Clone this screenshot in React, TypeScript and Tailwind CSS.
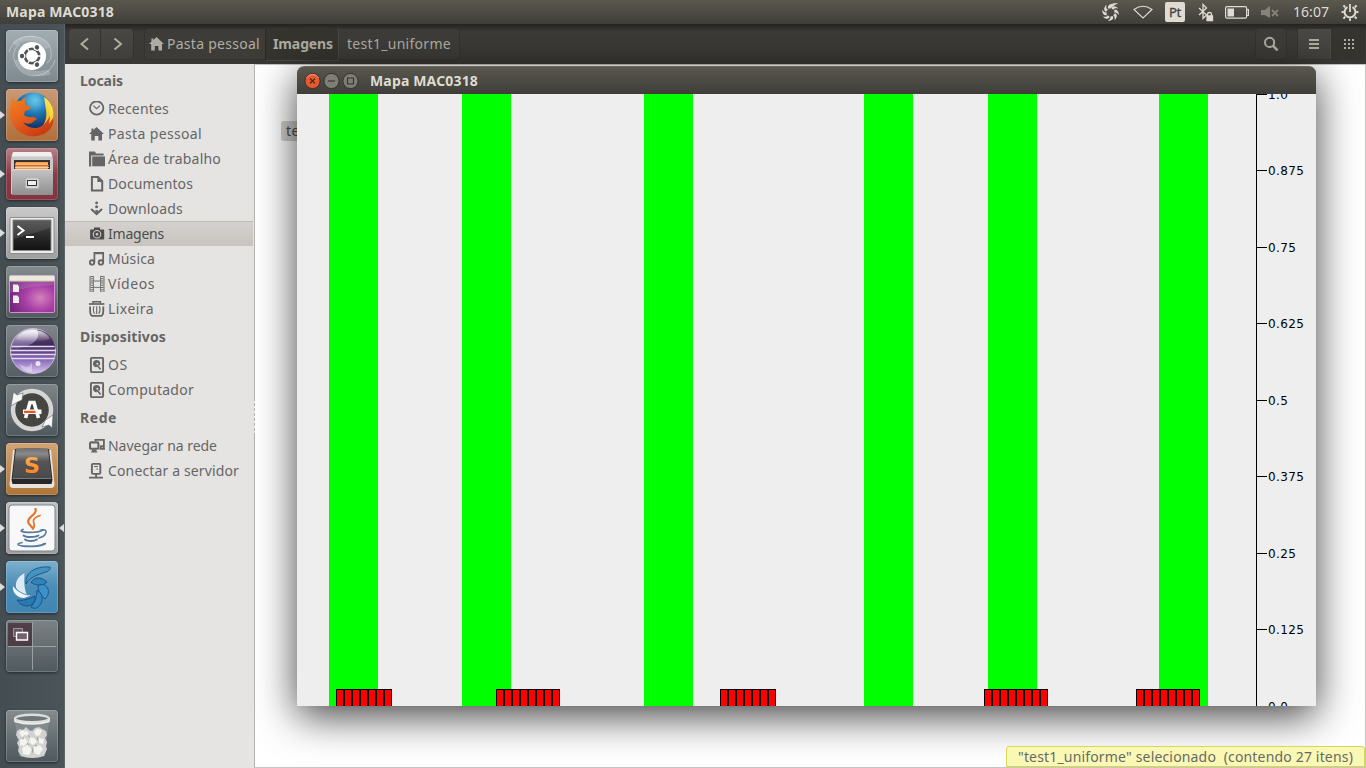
import { useLayoutEffect, useRef, type ReactNode } from "react";

/** Text whose tracking is adjusted so that it spans exactly `w` pixels. */
function Fit({ w, children, className = "" }: { w: number; children: string; className?: string }) {
  const ref = useRef<HTMLSpanElement>(null);
  useLayoutEffect(() => {
    const el = ref.current;
    if (!el) return;
    el.style.letterSpacing = "0px";
    const natural = el.getBoundingClientRect().width;
    el.style.letterSpacing = `${(w - natural) / children.length}px`;
  }, [w, children]);
  return (
    <span ref={ref} className={`inline-block shrink-0 whitespace-pre ${className}`}>
      {children}
    </span>
  );
}

/* ---------- sidebar icons (16 x 16) ---------- */

function Glyph({ children, className = "size-4" }: { children: ReactNode; className?: string }) {
  return (
    <svg viewBox="0 0 16 16" className={`shrink-0 ${className}`} fill="none" stroke="currentColor" strokeWidth="1.6">
      {children}
    </svg>
  );
}

const homeShape = <path d="M7.5 1 15 8h-2v6.4H9.4V10H5.8v4.4H2.2V8H0l2.4-2.3V2.6h2v1.3z" fill="currentColor" stroke="none" />;

const glyphs: Record<string, ReactNode> = {
  recent: (
    <>
      <circle cx="7.7" cy="7" r="6.7" strokeWidth="1.8" />
      <path d="M4.3 4.6 7.6 7.6 11 4.6" strokeWidth="1.2" />
    </>
  ),
  home: homeShape,
  folder: (
    <>
      <path d="M0 .6h6l1 2h7.6v2H2.2v11H0z" fill="currentColor" stroke="none" />
      <path d="M3.2 5.4H16v9.9H3.2z" fill="currentColor" stroke="none" />
    </>
  ),
  doc: (
    <>
      <path d="M2.9 1.1h6.2l4.1 4.1v9.2H2.9z" strokeWidth="2" />
      <path d="M8.4 1v5h5z" fill="currentColor" stroke="none" />
    </>
  ),
  download: (
    <>
      <circle cx="7.6" cy="1.9" r="1.4" fill="currentColor" stroke="none" />
      <circle cx="7.6" cy="5.8" r="1.5" fill="currentColor" stroke="none" />
      <path d="M2.2 8l5.4 5L13 8" strokeWidth="2.1" />
      <path d="M6.4 9h2.4v3H6.4z" fill="currentColor" stroke="none" />
    </>
  ),
  camera: (
    <>
      <path
        fillRule="evenodd"
        d="M2 3.4h3V1.4h6v2h3.4q.8 0 .8.8v8.6q0 .8-.8.8H1.9q-.8 0-.8-.8V4.2q0-.8.9-.8zM8 4a4.3 4.3 0 1 0 0 8.6A4.3 4.3 0 0 0 8 4z"
        fill="currentColor"
        stroke="none"
      />
      <circle cx="8" cy="8.3" r="2.3" strokeWidth="1.8" />
    </>
  ),
  music: (
    <>
      <circle cx="3" cy="11.4" r="2.2" strokeWidth="1.9" />
      <circle cx="11.9" cy="11.4" r="2.2" strokeWidth="1.9" />
      <path d="M5.4 11.4V1.8h8.8v9.6" strokeWidth="1.7" />
      <path d="M5 1h10v2.2H5z" fill="currentColor" stroke="none" />
    </>
  ),
  video: (
    <>
      <path d="M1 0v16M4.4 0v16M11.6 0v16M15 0v16M4.4 5h7.2M4.4 11.4h7.2" strokeWidth=".9" />
      <path d="M2.7 0v16M13.3 0v16" strokeWidth="2.4" strokeDasharray="1 1.2" />
    </>
  ),
  trash: (
    <>
      <path d="M4 2.6V.8h7.4v1.8" strokeWidth="1.6" />
      <path d="M0 3h15.4" strokeWidth="1.7" />
      <path d="M1.1 5.4v4.6q.2 4.9 2.6 4.9h8q2.4 0 2.6-4.9V5.4" strokeWidth="1.8" />
      <path d="M5 5.2q-1.6 4 .6 7.6M7.7 5.2v7.8M10.4 5.2q1.6 4-.6 7.6" strokeWidth="1.1" />
    </>
  ),
  disk: (
    <>
      <rect x="1.9" y=".9" width="12.2" height="14.2" rx="1" strokeWidth="1.9" />
      <circle cx="7.6" cy="6.6" r="3.6" fill="currentColor" stroke="none" />
      <circle cx="8.4" cy="6.8" r="1" className="fill-[#e6e4e2]" stroke="none" />
      <path d="M8.6 9l3 3.4" className="stroke-[#e6e4e2]" strokeWidth="3.4" />
      <path d="M8.4 8.4l3.2 4.2" strokeWidth="1.6" />
    </>
  ),
  network: (
    <>
      <rect x="1" y="4.4" width="8.4" height="6.4" rx="1" strokeWidth="2.1" />
      <path d="M3.4 11.6h3.6l1.4 2.8H2z" fill="currentColor" stroke="none" />
      <path d="M6.4 3V1.9h8.5v6.4h-3M12 8.2h2l1.4 2.6h-4z" strokeWidth="1.8" />
    </>
  ),
  server: (
    <>
      <rect x="2.9" y=".9" width="8.4" height="10" rx="1.2" strokeWidth="1.9" />
      <path d="M5 3.5h4M7.4 6h1.6" strokeWidth="1.2" />
      <path d="M7.1 11v4M0 14.6h14" strokeWidth="1.9" />
    </>
  ),
};

type Place = [icon: string, label: string, width: number];
const sections: { title: string; w: number; items: Place[] }[] = [
  {
    title: "Locais",
    w: 43,
    items: [
      ["recent", "Recentes", 61],
      ["home", "Pasta pessoal", 94],
      ["folder", "Área de trabalho", 113],
      ["doc", "Documentos", 85],
      ["download", "Downloads", 75],
      ["camera", "Imagens", 56],
      ["music", "Música", 47],
      ["video", "Vídeos", 47],
      ["trash", "Lixeira", 46],
    ],
  },
  { title: "Dispositivos", w: 86, items: [["disk", "OS", 20], ["disk", "Computador", 86]] },
  { title: "Rede", w: 37, items: [["network", "Navegar na rede", 109], ["server", "Conectar a servidor", 131]] },
];

function Sidebar() {
  return (
    <aside className="relative w-[190px] shrink-0 border-r border-r-[#b8b5b1] bg-[#e6e4e2] pt-1 text-[14px] leading-[25px] text-[#656565]">
      {sections.map((s) => (
        <section key={s.title} className="mb-[3px]">
          <h2 className="mb-[3px] flex h-[25px] pl-[15px] font-bold">
            <Fit w={s.w}>{s.title}</Fit>
          </h2>
          {s.items.map(([icon, label, w]) => (
            <div
              key={label}
              className={
                "flex h-[25px] items-center gap-[3px] pl-6 " +
                (icon === "camera" ? "mr-px border-t border-[#bfbcb8] bg-linear-to-b from-[#d4d1ce] to-[#c8c4c0] leading-6 text-[#4c4c4c]" : "")
              }
            >
              <Glyph>{glyphs[icon]}</Glyph>
              <Fit w={w}>{label}</Fit>
            </div>
          ))}
        </section>
      ))}
      <div className="absolute top-[337px] -right-px flex flex-col gap-[3px]">
        {[0, 1, 2, 3, 4, 5, 6].map((i) => (
          <i key={i} className="h-0.5 w-px bg-[#eeeeee]" />
        ))}
      </div>
    </aside>
  );
}

/* ---------- launcher artwork (52 x 52) ---------- */

function Defs() {
  return (
    <svg className="absolute size-0">
      <defs>
        <radialGradient id="globe" cx=".55" cy=".2" r=".75">
          <stop offset="0" stopColor="#6ed0f0" />
          <stop offset=".45" stopColor="#2077b5" />
          <stop offset="1" stopColor="#0c2a60" />
        </radialGradient>
        <linearGradient id="fox" x1="0" y1="0" x2=".6" y2="1">
          <stop offset="0" stopColor="#f0831f" />
          <stop offset=".55" stopColor="#e65f1c" />
          <stop offset="1" stopColor="#c93c14" />
        </linearGradient>
        <linearGradient id="flame" x1="0" y1="0" x2="0" y2="1">
          <stop offset="0" stopColor="#f7e44b" />
          <stop offset=".6" stopColor="#f5c02c" />
          <stop offset="1" stopColor="#e5701b" />
        </linearGradient>
        <linearGradient id="steel" x1="0" y1="0" x2="0" y2="1">
          <stop offset="0" stopColor="#c4c4c4" />
          <stop offset="1" stopColor="#8f8f8f" />
        </linearGradient>
        <linearGradient id="black" x1="0" y1="0" x2="0" y2="1">
          <stop offset="0" stopColor="#4a4a4a" />
          <stop offset=".5" stopColor="#2b2b2b" />
          <stop offset="1" stopColor="#111" />
        </linearGradient>
        <radialGradient id="pink" cx=".68" cy=".6" r=".75">
          <stop offset="0" stopColor="#d583b8" />
          <stop offset=".45" stopColor="#a940a8" />
          <stop offset="1" stopColor="#6b2374" />
        </radialGradient>
        <linearGradient id="orb" x1="0" y1="0" x2="0" y2="1">
          <stop offset="0" stopColor="#dcd6e6" />
          <stop offset=".25" stopColor="#9585ad" />
          <stop offset=".48" stopColor="#553c7a" />
          <stop offset=".7" stopColor="#8b6cba" />
          <stop offset="1" stopColor="#d9c6ef" />
        </linearGradient>
        <linearGradient id="shine" x1="0" y1="0" x2="0" y2="1">
          <stop offset="0" stopColor="#fff" stopOpacity=".85" />
          <stop offset="1" stopColor="#fff" stopOpacity="0" />
        </linearGradient>
        <linearGradient id="key" x1="0" y1="0" x2="0" y2="1">
          <stop offset="0" stopColor="#6e6e6e" />
          <stop offset=".2" stopColor="#8a8a8a" />
          <stop offset=".45" stopColor="#555" />
          <stop offset="1" stopColor="#4a4a4a" />
        </linearGradient>
        <linearGradient id="sand" x1="0" y1="0" x2="0" y2="1">
          <stop offset="0" stopColor="#ffb866" />
          <stop offset="1" stopColor="#ff7a08" />
        </linearGradient>
      </defs>
    </svg>
  );
}

function CircleOfFriends() {
  return (
    <>
      <g fill="none" stroke="#fff">
        <path d="M3 22C8 4 32 2 42 13 47 22 46 30 41 33" strokeOpacity=".35" />
        <path d="M49 30C44 48 22 50 13 39 5 29 7 20 13 14" strokeOpacity=".35" />
        <path d="M8 14C20 4 36 8 42 18" strokeOpacity=".18" strokeWidth="5" />
        <path d="M11 30C14 42 28 46 44 42" strokeOpacity=".22" strokeWidth="5" />
      </g>
      <circle cx="26" cy="26" r="14" fill="#fff" />
      <circle cx="26" cy="26" r="7.2" fill="none" stroke="#4d5357" strokeWidth="2.8" />
      {[0, 120, 240].map((a) => (
        <path key={a} d="M26 26h12" stroke="#fff" strokeWidth="1.3" transform={`rotate(${a} 26 26)`} />
      ))}
      <circle cx="26" cy="26" r="5.7" fill="#fff" />
      {[180, 300, 60].map((a) => (
        <g key={a} transform={`rotate(${a} 26 26)`}>
          <circle cx="35.6" cy="26" r="3.1" fill="#fff" />
          <circle cx="36" cy="26" r="2.2" fill="#4d5357" />
        </g>
      ))}
    </>
  );
}

const art: { id: string; bg: string; running?: boolean; focused?: boolean; draw: ReactNode }[] = [
  { id: "dash", bg: "from-[#a2adb2] to-[#7e8a90]", draw: <CircleOfFriends /> },
  {
    id: "firefox",
    bg: "from-[#c99a78] to-[#b06f39]",
    running: true,
    draw: (
      <>
        <circle cx="27" cy="23" r="19.5" fill="url(#globe)" />
        <path d="M22 7q6-4 11-2l-2 5 5 3-4 5-6-2-3 3-3-6z" fill="#4fb4dc" opacity=".35" />
        <path d="M38 8C51 17 50 36 39 44 33 48 26 47 24 44 35 43 42 33 40 21z" fill="url(#flame)" />
        <path
          d="M7 8 9 13Q12 11 15 12 17 9 21 8 18 12 20 16L25 18Q24 21 19 22L18 26Q22 29 26 28 30 28 31 30 29 31 26 34 21 36 17 33 21 39 30 39 40 38 46 22 51 38 38 45 24 51 12 42 2 33 4 20 5 12 7 8z"
          fill="url(#fox)"
        />
        <path d="M40 9q9 8 7 20l-4 6q3-13-3-20z" fill="#f9df45" opacity=".9" />
      </>
    ),
  },
  {
    id: "files",
    bg: "from-[#b98088] via-[#8c3a46] to-[#84323e]",
    running: true,
    draw: (
      <>
        <path d="M7 5h38l2 6v35H5V11z" fill="#c9c9c9" />
        <path d="M7 4h38l1.5 4.5H5.5z" fill="#eee" />
        <path d="M8 12h36v11H8z" fill="#39322e" />
        <path d="M10 14h32v9H9z" fill="#eb9c53" />
        <path d="M9 16h33M9 19.5h34" stroke="#f9cf9b" strokeWidth="1" />
        <path d="M9 17.5h34" stroke="#e36b21" />
        <path d="M8.5 21h35.500l3 3v23H6V24z" fill="url(#steel)" />
        <path d="M8 21.500h37" stroke="#ddd" />
        <rect x="19.5" y="30" width="13.500" height="10.500" rx="2" fill="#d8d8d8" stroke="#b4b4b4" />
        <rect x="21.500" y="32.500" width="9" height="5" fill="#eee" stroke="#333" />
      </>
    ),
  },
  {
    id: "terminal",
    bg: "from-[#c9c9c9] to-[#9e9e9e]",
    running: true,
    draw: (
      <>
        <rect x="4" y="10.500" width="44" height="36" rx="1" fill="#eee" stroke="#8c8c8c" />
        <rect x="7" y="13" width="38" height="30.500" fill="url(#black)" stroke="#888" />
        <path d="M8 14h36v7L8 32z" fill="#fff" opacity=".1" />
        <path d="M11.500 19l6 4.500-6 4.500" fill="none" stroke="#fff" strokeWidth="2" />
        <path d="M20 30h8" stroke="#fff" strokeWidth="2" />
      </>
    ),
  },
  {
    id: "window",
    bg: "from-[#858c8f] to-[#505a5f]",
    draw: (
      <>
        <rect x="3.5" y="10" width="45" height="36.500" rx="1.500" fill="url(#pink)" stroke="#d98ad4" />
        <path d="M4 15h44v4Q20 20 4 27z" fill="#fff" opacity=".12" />
        <path d="M3.500 9.500h45V15h-45z" fill="#eceadc" />
        <path d="M3.500 15.200h45" stroke="#bcb99d" />
        <path d="M7 18.500h4.500l1.500 2V26H7zM7 29.500h4.500l1.500 2V37H7z" fill="#eee" />
      </>
    ),
  },
  {
    id: "eclipse",
    bg: "from-[#7e8588] to-[#555e63]",
    draw: (
      <>
        <circle cx="27" cy="26" r="22.500" fill="url(#orb)" stroke="#c9b9dc" />
        <path d="M31 4.500c12 2 18 10 18.500 19H12C28 20 35 14 31 4.500z" fill="#331a48" opacity=".75" />
        <path d="M27 5c-9 0-15 4-17 9 8 4 24 4 34 0C42 9 36 5 27 5z" fill="url(#shine)" />
        <path d="M5.500 21.500h43M4.500 25.500h45M4.500 29.500h45M5.500 33.500h43" stroke="#e6daf3" strokeWidth="1.300" />
        <path d="M13 39q10 7 13-2v10q-9 0-13-8z" fill="#fff" opacity=".35" />
        <circle cx="32" cy="38.500" r="2.500" fill="#fff" opacity=".8" />
      </>
    ),
  },
  {
    id: "updater",
    bg: "from-[#7e8588] to-[#4f595e]",
    draw: (
      <>
        <circle cx="26" cy="26" r="17.500" fill="#454541" />
        <circle cx="26" cy="26" r="19" fill="none" stroke="#d6d6d4" strokeWidth="4.500" />
        <path d="M5 22 7.500 8l3.500 3 6-2-1 7-4.500 2zM47 31l-1 13-3-3-7 2 3.500-7z" fill="#f6f6f6" stroke="#5b6265" strokeWidth=".6" />
        <path d="M19.500 34l4.500-15.500h4L32.500 34" fill="none" stroke="#fff" strokeWidth="3.600" />
        <path d="M17 25.500h18.500v4.500H17z" fill="#fff" />
        <path d="M18 26.700h11.500v2.200H18z" fill="#e95420" />
      </>
    ),
  },
  {
    id: "sublime",
    bg: "from-[#d3a475] to-[#ad7536]",
    running: true,
    draw: (
      <>
        <path d="M7 7 3.500 41q0 4 3.500 4h38q3.500 0 3.500-4L45 7z" fill="#e7e2dc" />
        <path d="M9 6q17-1 34 0l3.500 31-1 4h-39l-1-4z" fill="#262626" />
        <path d="M10 5.500q16-1 32 0L45.500 35h-39z" fill="url(#key)" />
        <path d="M6.500 35.500h39" stroke="#777" />
        <text x="26" y="29.500" textAnchor="middle" fontSize="22" fontWeight="700" fontFamily="'DejaVu Sans', sans-serif" fill="url(#sand)">
          S
        </text>
      </>
    ),
  },
  {
    id: "java",
    bg: "from-[#c5c0bc] to-[#a39d98]",
    running: true,
    focused: true,
    draw: (
      <>
        <rect x="3" y="3" width="46" height="46" rx="3" fill="#f8f8f8" stroke="#71879a" />
        <g fill="none" strokeLinecap="round">
          <path d="M29.500 7c2.500 6-10 8-7 14 1 2 3 3 4 5" stroke="#e8742a" strokeWidth="2.200" />
          <path d="M34 13.500c-8 3-7 5.500-6 8.500 1 2 0 3-1 5" stroke="#e8742a" strokeWidth="1.800" />
          <path d="M17 27.500c-8 3.500 14 4 20 .5M17.500 33.500c2 2 12 2 15 0M19 37.500c2 2 9 2 12 0" stroke="#557b9c" strokeWidth="1.800" />
          <path d="M35 28c8-2 6 6-2 8M16 40.500c-15 3.500 17 5.500 22 1M39.500 41.500c-2 2.500-14 4-24 2.500" stroke="#557b9c" strokeWidth="1.500" />
        </g>
      </>
    ),
  },
  {
    id: "shutter",
    bg: "from-[#7cb0cd] via-[#4a8cb6] to-[#4085b3]",
    running: true,
    draw: (
      <g stroke="#174f83" strokeWidth=".9" strokeLinejoin="round">
        <path d="M20 23C19 12 28 5 44 6c1 2-1 4-4 5-10 3-17 6-20 12z" fill="#4594c0" />
        <path d="M25 21.500c3-5.500 9-6.500 16-.5-3 3.500-10 4.500-16 .5z" fill="#2f83b9" />
        <path d="M32 25c5-3 8-1 10 3 1 4 0 7-3 10-3-3-7-7-7-13z" fill="#3b92c8" />
        <path d="M31 29c5 3 7 9 3 15-3 4-6 4-9 2 3-4 6-9 6-17z" fill="#3389c0" />
        <path d="M29 35c1 6-3 10-8 10-5 0-8-3-10-6 6 1 12-1 18-4z" fill="#2a79b0" />
        <path d="M18.500 12C11 16 8 23 11 29q4 3 10 5c-3-6-3-15-2.500-22z" fill="#dcebf3" stroke="none" />
        <path d="M7 25c-1 6 4 12 11 12l7-2.500C18 34 11 31 7 25z" fill="#eef5f9" stroke="none" />
        <path d="M8.500 25.500q5 7 13 8.500" fill="none" stroke="#4b8db5" strokeWidth=".8" />
      </g>
    ),
  },
  {
    id: "workspaces",
    bg: "from-[#7c8386] to-[#50595e]",
    draw: (
      <>
        <path d="M2 3h24v23H2z" fill="#49343e" opacity=".85" />
        <path d="M26.500 2v48M2 26.500h48" stroke="#9ba1a3" />
        <path d="M7.500 8.500h9v8h-9z" fill="#66535c" stroke="#999" />
        <path d="M10.500 12.500h11v7.500h-11z" fill="#76606a" stroke="#fff" strokeWidth="1.400" />
      </>
    ),
  },
];

function Tile({ bg, children }: { bg: string; children: ReactNode }) {
  return (
    <div className={`size-[52px] overflow-hidden rounded-[4px] bg-linear-to-b ${bg} shadow-[inset_0_0_0_1px_rgba(255,255,255,0.18),0_1px_3px_rgba(0,0,0,0.5)]`}>
      <svg viewBox="0 0 52 52" className="size-[52px]">
        {children}
      </svg>
    </div>
  );
}

function Launcher() {
  return (
    <nav className="flex w-[65px] shrink-0 flex-col border-r border-[#5c6468] bg-linear-to-r from-[#434d52] to-[#4b5459] pt-1.5 pb-1.5">
      <Defs />
      <div className="flex flex-col gap-[7px]">
        {art.map((a) => (
          <div key={a.id} className="relative flex pl-1.5">
            {a.running && (
              <svg viewBox="0 0 5 8" className="absolute top-[22px] left-0 h-2 w-[5px]">
                <path d="M0 0 5 4 0 8z" fill="#ddd" />
              </svg>
            )}
            <Tile bg={a.bg}>{a.draw}</Tile>
            {a.focused && (
              <svg viewBox="0 0 5 8" className="absolute top-[22px] right-0 h-2 w-[5px]">
                <path d="M5 0 0 4 5 8z" fill="#ddd" />
              </svg>
            )}
          </div>
        ))}
      </div>
      <div className="mt-auto pl-1.5">
        <Tile bg="from-[#858c8f] to-[#4e585d]">
          <path d="M9 10l4 36q13 4 26 0l4-36z" fill="#aab1b1" opacity=".3" />
          <path
            d="M11 21l3-2 3 1 3-3 3 3 3 1 3-3 4-1 3 2 4 2 1 4-2 3 2 4-1 4 1 3-3 7q-12 4-23 0l-3-5 1-4-2-4 2-3-3-5z"
            fill="#d2d3d0"
          />
          <path d="M13 22l4-2 3 4-4 3zM19 20l4 3-2 3-3-2zM28 22l3-3 5 1-2 5-4 1zM14 30l5-2 3 4-4 4-4-1zM24 27l4 1 3 4-4 3-4-3zM33 28l5 1-1 5-4-1zM16 38l5-3 5 4-3 6-6-1zM28 37l6-2 3 4-4 6-5-2z" fill="#f4f4f1" />
          <path d="M22 25l2 3M21 33l2 2M31 27l1 3M29 35l2 1M26 38l1 5M18 28l-2 1" stroke="#9ea2a0" fill="none" />
          <ellipse cx="26" cy="8.500" rx="17" ry="3.800" fill="#6f7678" stroke="#dedede" strokeWidth="2.400" />
          <path d="M9 9.500v2q17 5 34 0v-2" fill="none" stroke="#efefef" strokeWidth="1.500" />
        </Tile>
      </div>
    </nav>
  );
}

/* ---------- panels ---------- */

function TopBar() {
  return (
    <header className="relative z-10 flex h-6 shrink-0 items-center justify-between bg-linear-to-b from-[#5b584e] to-[#3f3e39] pl-1.5 text-[14px] leading-6 text-[#dfdbd2]">
      <Fit w={108} className="font-bold">Mapa MAC0318</Fit>
      <div className="flex items-center pr-[7px]">
        <svg viewBox="-25 -25 50 50" className="mr-[13px] size-[19px]" fill="#dfdbd2">
          <path d="M-6-10C-9-18-2-25 20-24 12-20 3-17 1-11z" />
          {[45, 90, 135, 180, 225, 270, 315].map((a) => (
            <path key={a} d="M-7-10C-9-17-4-22 7-22 2-18-1-16 0-10z" transform={`rotate(${a})`} />
          ))}
        </svg>
        <svg viewBox="0 0 20 14" className="mr-3 h-3.5 w-5" fill="none" stroke="#dfdbd2" strokeWidth="1.1">
          <path d="M1 4.500Q10-2 19 4.500L10 13z" />
        </svg>
        <div className="mr-[13px] flex h-5 w-5 items-center justify-center rounded-[2px] bg-[#dfdbd2] text-[13px] text-[#454440] [-webkit-text-stroke:0.3px]">
          <Fit w={12}>Pt</Fit>
        </div>
        <svg viewBox="0 0 16 19" className="mr-[11px] h-[19px] w-4" fill="none" stroke="#dfdbd2" strokeWidth="1.3">
          <path d="M1 5l7.500 7L5 15.500V1.500L8.500 5 1 12" />
          <path d="M9.500 13V11.500a2 2 0 0 1 4 0V13" />
          <path d="M9 13h5.500v4.500H9z" fill="#dfdbd2" />
        </svg>
        <svg viewBox="0 0 24 13" className="mr-3 h-[13px] w-6" fill="none" stroke="#dfdbd2" strokeWidth="1.2">
          <rect x=".6" y=".6" width="21" height="11.600" rx="1.500" />
          <path d="M22 3.500h1.400v6H22" />
          <path d="M2.500 2.500h6.500v8H2.500z" fill="#dfdbd2" stroke="none" />
        </svg>
        <svg viewBox="0 0 18 13" className="mr-[14px] h-[13px] w-[18px] text-[#85837a]">
          <path d="M0 4h3.500L9 0v12L3.500 9H0z" fill="currentColor" />
          <path d="M11 4l6 6M17 4l-6 6" stroke="currentColor" strokeWidth="1.8" />
        </svg>
        <Fit w={36} className="mr-3">16:07</Fit>
        <svg viewBox="0 0 18 18" className="h-[18px] w-[18px]" fill="none" stroke="#dfdbd2">
          <path d="M6.500 4.200a5.400 5.400 0 1 0 5 0" strokeWidth="2" />
          <path d="M9 1v8" strokeWidth="1.8" />
          <path d="M4.200 4.200 2.400 2.400M2.800 9H.6M4.200 13.800l-1.800 1.800M9 15.400v2.400M13.800 13.800l1.800 1.800M15.200 9h2.200M13.800 4.200l1.800-1.800" strokeWidth="2" />
        </svg>
      </div>
    </header>
  );
}

function Toolbar() {
  return (
    <div className="flex h-[41px] shrink-0 items-start border-b border-[#c8c5bf] bg-linear-to-b from-[#24231f] via-[#3c3b37] via-20% to-[#393834] pt-1 pr-px pl-[3px] text-[14px] leading-8 text-[#afada3]">
      <div className="flex h-8 rounded-[4px] border border-[#34332f] bg-linear-to-b from-[#484743] to-[#403f3b]">
        <div className="flex w-8 items-center justify-center border-r border-[#34332f]">
          <svg viewBox="0 0 12 12" className="size-3" fill="none" stroke="currentColor" strokeWidth="2"><path d="M9 .5 2.500 6 9 11.500" /></svg>
        </div>
        <div className="flex w-8 items-center justify-center">
          <svg viewBox="0 0 12 12" className="size-3" fill="none" stroke="currentColor" strokeWidth="2"><path d="M3.500.5 10 6l-6.500 5.500" /></svg>
        </div>
      </div>
      <div className="ml-[10px] flex h-8 rounded-[4px] border border-[#34332f] bg-[#3d3c38] leading-[30px]">
        <div className="flex w-[120px] items-center pl-1">
          <Glyph className="mr-[2px] size-4">{homeShape}</Glyph>
          <Fit w={93}>Pasta pessoal</Fit>
        </div>
        <div className="-my-px flex h-[33px] w-[74px] items-center border-r border-b border-l border-[#484743] border-l-[#2b2a27] bg-[#35342f] pl-[7px] font-bold">
          <Fit w={60}>Imagens</Fit>
        </div>
        <div className="flex w-[120px] items-center pl-2">
          <Fit w={104}>test1_uniforme</Fit>
        </div>
      </div>
      <div className="ml-auto flex size-8 items-center justify-center rounded-[4px] border border-[#34332f] bg-[#3d3c38]">
        <svg viewBox="0 0 16 16" className="size-4" fill="none" stroke="currentColor" strokeWidth="2">
          <circle cx="6.600" cy="6.400" r="4.600" />
          <path d="M9.800 9.600l4.800 4.800" strokeWidth="2.600" />
        </svg>
      </div>
      <div className="ml-[10px] flex h-8 rounded-[4px] border border-[#34332f]">
        <div className="flex w-8 items-center justify-center bg-linear-to-b from-[#4a4945] to-[#403f3b]">
          <svg viewBox="0 0 10 10" className="size-[10px]" stroke="currentColor" strokeWidth="2"><path d="M0 1h10M0 5h10M0 9h10" /></svg>
        </div>
        <div className="flex w-[34px] items-center justify-center border-l border-[#4b4a46] bg-[#35342f] pl-1">
          <svg viewBox="0 0 11 11" className="mt-px size-[11px]" fill="currentColor">
            {[0, 4, 8].flatMap((y) => [0, 4, 8].map((x) => <rect key={`${x}-${y}`} x={x} y={y} width="2" height="2" />))}
          </svg>
        </div>
      </div>
    </div>
  );
}

/* ---------- map window ---------- */

const walls = [32, 165, 347, 567, 691, 862];
const particles = [
  { x: 39, n: 7 },
  { x: 199, n: 8 },
  { x: 423, n: 7 },
  { x: 687, n: 8 },
  { x: 839, n: 8 },
];
const ticks: [y: number, label: string, w: number][] = [
  [0, "1.0", 20],
  [76, "0.875", 36],
  [153, "0.75", 28],
  [229, "0.625", 36],
  [306, "0.5", 20],
  [382, "0.375", 36],
  [459, "0.25", 28],
  [535, "0.125", 36],
  [612, "0.0", 20],
];

function MapWindow() {
  return (
    <div className="absolute top-[66px] left-[297px] flex h-[640px] w-[1019px] flex-col rounded-t-[7px] shadow-[0_10px_40px_rgba(0,0,0,0.75)]">
      <div className="flex h-7 shrink-0 items-center rounded-t-[7px] border-t border-[#6b685e] bg-linear-to-b from-[#59574e] to-[#3f3e39] pl-[7px] text-[#3a3935]">
        <svg viewBox="0 0 56 18" className="mr-[10px] h-[18px] w-14" fill="none">
          <circle cx="8.500" cy="9" r="7.600" fill="#e9592e" stroke="#33322e" />
          <path d="M2.500 6a6.800 6.800 0 0 1 12 0" stroke="#f79a78" />
          <path d="M6 6.500l5 5M11 6.500l-5 5" stroke="#47251a" strokeWidth="1.1" />
          <circle cx="27.500" cy="9" r="7.600" fill="#7f7d75" stroke="#33322e" />
          <path d="M24 9h7" stroke="#33322e" strokeWidth="1.1" />
          <circle cx="46.500" cy="9" r="7.600" fill="#7f7d75" stroke="#33322e" />
          <path d="M43.500 6h6v6h-6z" stroke="#33322e" strokeWidth="1.1" />
        </svg>
        <Fit w={108} className="text-[14px] font-bold text-[#dfdbd2]">Mapa MAC0318</Fit>
      </div>
      <svg viewBox="0 0 1019 612" className="h-[612px] w-[1019px] bg-[#eeeeee]" shapeRendering="crispEdges">
        {walls.map((x) => (
          <rect key={x} x={x} y="0" width="49" height="612" fill="#00ff00" />
        ))}
        {particles.map(({ x, n }) => (
          <g key={x}>
            <rect x={x} y="595" width={n * 8} height="17" fill="#000" />
            {Array.from({ length: n }, (_, i) => (
              <rect key={i} x={x + 1 + i * 8} y="596" width="6" height="16" fill="#ff0000" />
            ))}
          </g>
        ))}
        <path d="M959 0h1v612h-1z" fill="#000" />
        {ticks.map(([y, label, w]) => (
          <g key={label}>
            {y < 612 && <rect x="959" y={y} width="11" height="1" fill="#000" />}
            <text x="971" y={y + 5} textLength={w} fontSize="12" fontFamily="'DejaVu Sans', sans-serif" fill="#000">
              {label}
            </text>
          </g>
        ))}
      </svg>
    </div>
  );
}

export default function App() {
  return (
    <div className="relative flex h-[768px] w-[1366px] flex-col overflow-hidden bg-white font-['Noto_Sans',sans-serif]">
      <TopBar />
      <div className="flex min-h-0 flex-1">
        <Launcher />
        <div className="flex min-w-0 flex-1 flex-col">
          <Toolbar />
          <div className="-mt-px flex min-h-0 flex-1">
            <Sidebar />
            <main className="flex-1 border-t border-r border-b border-[#c8c5c1] bg-white pt-14 pl-[26px]">
              <div className="h-5 w-[120px] rounded-[3px] bg-[#d4d1ce] pl-[5px] text-[14px] leading-5 text-[#4c4c4c]">
                <Fit w={105}>test1_uniforme</Fit>
              </div>
            </main>
          </div>
        </div>
      </div>
      <MapWindow />
      <div className="absolute top-[746px] left-[1006px] flex h-[21px] w-[359px] items-center rounded-t-[3px] border border-[#d6d65c] bg-[#f9f8b5] pl-[11px] text-[14px] leading-5 text-[#696963]">
        <Fit w={335}>{'"test1_uniforme" selecionado  (contendo 27 itens)'}</Fit>
      </div>
    </div>
  );
}
